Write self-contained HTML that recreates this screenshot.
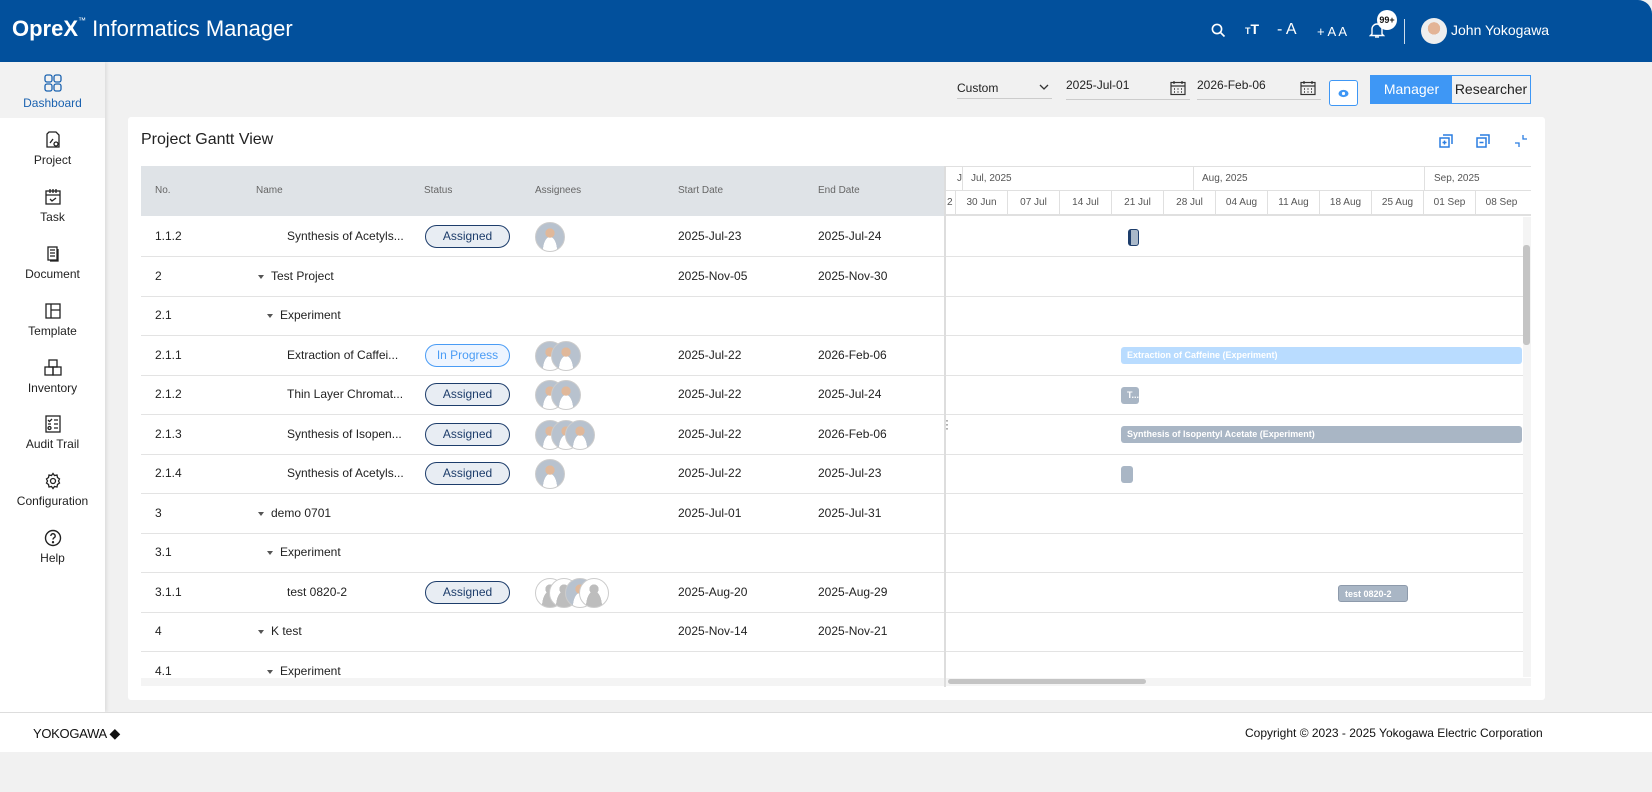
<!DOCTYPE html>
<html><head><meta charset="utf-8"><style>
*{box-sizing:border-box;margin:0;padding:0}
body{width:1652px;height:792px;overflow:hidden;background:#f1f1f1;font-family:"Liberation Sans","DejaVu Sans",sans-serif;color:#222;position:relative}
.hdr{position:absolute;left:0;top:0;width:1652px;height:62px;background:#02509c;color:#fff;border-top-right-radius:14px}
.abs{position:absolute}
.side{position:absolute;left:0;top:62px;width:105px;height:650px;background:#fff;box-shadow:2px 0 3px rgba(0,0,0,.08)}
.nav{position:absolute;left:0;width:105px;text-align:center;font-size:12px;color:#222}
.nav svg{display:block;margin:0 auto 4px}
.card{position:absolute;left:128px;top:117px;width:1417px;height:583px;background:#fff;border-radius:3px}
.th{position:absolute;top:166px;height:50px;font-size:10px;color:#666;line-height:50px}
.row{position:absolute;left:141px;width:1390px;height:40px;border-bottom:1px solid #e3e3e3;font-size:12px}
.row span{position:absolute;top:0;line-height:39px;white-space:nowrap}
.pill{position:absolute;left:284px;top:8px;width:85px;height:23px;border:1px solid #1d3d6b;border-radius:12px;background:#e8edf3;text-align:center;line-height:21px;font-size:12px;color:#1d3d6b}
.pill.ip{border-color:#4a9cf5;background:#eef5ff;color:#4a9cf5}
.av{position:absolute;top:5px;width:30px;height:30px;border-radius:50%;border:1px solid #ccc;background:radial-gradient(circle at 50% 36%,#e0b89a 0 20%,transparent 21%),radial-gradient(ellipse at 50% 100%,#fff 0 35%,transparent 36%),#b8c2ce}
.av.g{background:radial-gradient(circle at 50% 36%,#bdbdbd 0 20%,transparent 21%),radial-gradient(ellipse at 50% 100%,#bdbdbd 0 40%,transparent 41%),#fff}
.bar{position:absolute;height:17px;border-radius:3px;font-size:9px;color:#fff;line-height:17px;padding-left:6px;overflow:hidden;white-space:nowrap;font-weight:bold}
.wk{position:absolute;top:190px;height:25px;width:52px;border-left:1px solid #e0e0e0;font-size:10px;color:#555;text-align:center;line-height:25px}
.tri{display:inline-block;width:0;height:0;border-left:3.5px solid transparent;border-right:3.5px solid transparent;border-top:4px solid #555;margin-right:7px;vertical-align:middle}
</style></head><body>
<div class="hdr">
 <div class="abs" style="left:12px;top:14px;font-size:22px;line-height:30px"><b style="font-weight:bold">OpreX</b><sup style="font-size:8px;vertical-align:top;line-height:14px">™</sup> Informatics Manager</div>
 <svg class="abs" style="left:1211px;top:23px" width="15" height="15" viewBox="0 0 15 15"><circle cx="6" cy="6" r="4.6" fill="none" stroke="#fff" stroke-width="1.6"/><path d="M9.5 9.5L13.5 13.5" stroke="#fff" stroke-width="1.6"/></svg>
 <div class="abs" style="left:1245px;top:21px;font-size:14px;font-weight:bold"><span style="font-size:9px">T</span>T</div>
 <div class="abs" style="left:1277px;top:21px;font-size:16px">- A</div>
 <div class="abs" style="left:1317px;top:24px;font-size:13px">+ A A</div>
 <svg class="abs" style="left:1369px;top:21px" width="16" height="18" viewBox="0 0 16 18"><path d="M3 13V8a5 5 0 0110 0v5l1.5 1.5h-13z" fill="none" stroke="#fff" stroke-width="1.4"/><path d="M6 16h4" stroke="#fff" stroke-width="1.4"/></svg>
 <div class="abs" style="left:1377px;top:10px;width:20px;height:20px;border-radius:50%;background:#fff;color:#111;font-size:9px;font-weight:bold;text-align:center;line-height:20px">99+</div>
 <div class="abs" style="left:1404px;top:19px;width:1px;height:25px;background:#fff;opacity:.8"></div>
 <div class="abs" style="left:1421px;top:18px;width:26px;height:26px;border-radius:50%;background:radial-gradient(circle at 50% 40%,#e3b496 0 30%,#eee 31%)"></div>
 <div class="abs" style="left:1451px;top:22px;font-size:14px">John Yokogawa</div>
</div>
<div class="side">
 <div class="abs" style="left:0;top:0;width:105px;height:56px;background:#f2f2f2"></div>
 <div class="nav" style="top:12px;color:#1a62b0"><svg width="18" height="18" viewBox="0 0 18 18" fill="none" stroke="#1a62b0" stroke-width="1.3"><rect x="1" y="1" width="7" height="7" rx="2"/><rect x="10" y="1" width="7" height="7" rx="2"/><rect x="1" y="10" width="7" height="7" rx="2"/><rect x="10" y="10" width="7" height="7" rx="2"/></svg>Dashboard</div>
 <div class="nav" style="top:69px"><svg width="16" height="18" viewBox="0 0 16 18" fill="none" stroke="#222" stroke-width="1.3"><path d="M4 1h7l3 3v12H2V3z"/><circle cx="11" cy="13" r="2"/><path d="M5 12l3-4"/></svg>Project</div>
 <div class="nav" style="top:126px"><svg width="18" height="18" viewBox="0 0 18 18" fill="none" stroke="#222" stroke-width="1.3"><rect x="2" y="3" width="14" height="13"/><path d="M2 7h14M6 1v4M12 1v4M9 1v4M6 11l2 2 4-3"/></svg>Task</div>
 <div class="nav" style="top:183px"><svg width="16" height="18" viewBox="0 0 16 18" fill="none" stroke="#222" stroke-width="1.3"><rect x="3" y="2" width="9" height="13"/><path d="M5 5h5M5 8h5M5 11h5M13 4v12H5"/></svg>Document</div>
 <div class="nav" style="top:240px"><svg width="18" height="18" viewBox="0 0 18 18" fill="none" stroke="#222" stroke-width="1.3"><rect x="2" y="2" width="14" height="14"/><path d="M7 2v14M7 8h9"/></svg>Template</div>
 <div class="nav" style="top:297px"><svg width="18" height="18" viewBox="0 0 18 18" fill="none" stroke="#222" stroke-width="1.3"><rect x="5" y="1" width="8" height="7"/><rect x="1" y="8" width="8" height="8"/><rect x="9" y="8" width="8" height="8"/></svg>Inventory</div>
 <div class="nav" style="top:353px"><svg width="18" height="18" viewBox="0 0 18 18" fill="none" stroke="#222" stroke-width="1.3"><rect x="2" y="1" width="14" height="16"/><path d="M4 5l1.5 1.5L8 4M10 5h4M10 9h4M10 13h4M4 9h3"/><circle cx="5.5" cy="13" r="1.5"/></svg>Audit Trail</div>
 <div class="nav" style="top:410px"><svg width="18" height="18" viewBox="0 0 18 18" fill="none" stroke="#222" stroke-width="1.3"><circle cx="9" cy="9" r="2.5"/><path d="M9 1.5l1.5 2 2.5-.5.5 2.5 2 1.5-1 2 1 2-2 1.5-.5 2.5-2.5-.5-1.5 2-1.5-2-2.5.5-.5-2.5-2-1.5 1-2-1-2 2-1.5.5-2.5 2.5.5z"/></svg>Configuration</div>
 <div class="nav" style="top:467px"><svg width="18" height="18" viewBox="0 0 18 18" fill="none" stroke="#222" stroke-width="1.4"><circle cx="9" cy="9" r="7.5"/><path d="M6.8 7a2.2 2.2 0 114 1.2c-.9.6-1.8 1-1.8 2.3"/><circle cx="9" cy="13.2" r=".5" fill="#222"/></svg>Help</div>
</div>
<div class="abs" style="left:957px;top:81px;width:95px;height:18px;font-size:12px;border-bottom:1px solid #ccc">Custom<svg class="abs" style="left:82px;top:3px" width="10" height="7" viewBox="0 0 10 7"><path d="M1 1l4 4 4-4" fill="none" stroke="#333" stroke-width="1.3"/></svg></div>
<div class="abs" style="left:1066px;top:78px;width:124px;height:22px;font-size:12px;border-bottom:1px solid #ccc">2025-Jul-01</div>
<div class="abs" style="left:1197px;top:78px;width:124px;height:22px;font-size:12px;border-bottom:1px solid #ccc">2026-Feb-06</div>
<svg class="abs" style="left:1170px;top:80px" width="16" height="16" viewBox="0 0 16 16" fill="none" stroke="#333" stroke-width="1.2"><rect x="1" y="2.5" width="14" height="12"/><path d="M1 6h14M4 1v3M12 1v3"/><path d="M4 9h1M7.5 9h1M11 9h1M4 12h1M7.5 12h1M11 12h1" stroke-width="1.4"/></svg>
<svg class="abs" style="left:1300px;top:80px" width="16" height="16" viewBox="0 0 16 16" fill="none" stroke="#333" stroke-width="1.2"><rect x="1" y="2.5" width="14" height="12"/><path d="M1 6h14M4 1v3M12 1v3"/><path d="M4 9h1M7.5 9h1M11 9h1M4 12h1M7.5 12h1M11 12h1" stroke-width="1.4"/></svg>
<div class="abs" style="left:1329px;top:80px;width:29px;height:26px;border:1px solid #3e97f5;border-radius:3px;background:#fff"><svg class="abs" style="left:8px;top:8px" width="11" height="9" viewBox="0 0 11 9"><ellipse cx="5.5" cy="4.5" rx="5" ry="3.6" fill="#3e97f5"/><circle cx="5.5" cy="4.5" r="1.6" fill="#fff"/></svg></div>
<div class="abs" style="left:1370px;top:75px;width:161px;height:29px;border:1px solid #3e97f5;font-size:14px;line-height:27px">
 <div class="abs" style="left:0;top:0;width:81px;height:27px;background:#3e97f5;color:#fff;text-align:center">Manager</div>
 <div class="abs" style="left:81px;top:0;width:78px;height:27px;text-align:center;color:#222">Researcher</div>
</div>
<div class="card"></div>
<div class="abs" style="left:141px;top:131px;font-size:16px">Project Gantt View</div>
<svg class="abs" style="left:1439px;top:134px" width="14" height="14" viewBox="0 0 14 14" fill="none" stroke="#2a7de1" stroke-width="1.5"><rect x="1" y="4" width="9" height="9"/><path d="M4 1h9v9M3.5 8.5h4M5.5 6.5v4"/></svg>
<svg class="abs" style="left:1476px;top:134px" width="14" height="14" viewBox="0 0 14 14" fill="none" stroke="#2a7de1" stroke-width="1.5"><rect x="1" y="4" width="9" height="9"/><path d="M4 1h9v9M3.5 8.5h4"/></svg>
<svg class="abs" style="left:1514px;top:134px" width="14" height="14" viewBox="0 0 14 14" fill="none" stroke="#2a7de1" stroke-width="1.3"><path d="M9 1v4h4M5 13V9H1"/></svg>
<div class="abs" style="left:141px;top:166px;width:804px;height:50px;background:#dfe3e7"></div>
<div class="th" style="left:155px">No.</div><div class="th" style="left:256px">Name</div><div class="th" style="left:424px">Status</div><div class="th" style="left:535px">Assignees</div><div class="th" style="left:678px">Start Date</div><div class="th" style="left:818px">End Date</div>
<div class="abs" style="left:945px;top:166px;width:586px;height:50px;border-top:1px solid #e0e0e0;border-bottom:2px solid #e0e0e0;background:#fff"></div>
<div class="abs" style="left:945px;top:190px;width:586px;height:1px;background:#e0e0e0"></div>
<div class="abs" style="left:957px;top:166px;font-size:10px;color:#555;line-height:25px">J</div>
<div class="abs" style="left:962px;top:166px;width:1px;height:24px;background:#e0e0e0"></div>
<div class="abs" style="left:971px;top:166px;font-size:10px;color:#555;line-height:25px">Jul, 2025</div>
<div class="abs" style="left:1193px;top:166px;width:1px;height:24px;background:#e0e0e0"></div>
<div class="abs" style="left:1202px;top:166px;font-size:10px;color:#555;line-height:25px">Aug, 2025</div>
<div class="abs" style="left:1424px;top:166px;width:1px;height:24px;background:#e0e0e0"></div>
<div class="abs" style="left:1434px;top:166px;font-size:10px;color:#555;line-height:25px">Sep, 2025</div>
<div class="abs" style="left:947px;top:190px;font-size:10px;color:#555;line-height:25px">2</div>
<div class="wk" style="left:955px">30 Jun</div><div class="wk" style="left:1007px">07 Jul</div><div class="wk" style="left:1059px">14 Jul</div><div class="wk" style="left:1111px">21 Jul</div><div class="wk" style="left:1163px">28 Jul</div><div class="wk" style="left:1215px">04 Aug</div><div class="wk" style="left:1267px">11 Aug</div><div class="wk" style="left:1319px">18 Aug</div><div class="wk" style="left:1371px">25 Aug</div><div class="wk" style="left:1423px">01 Sep</div><div class="wk" style="left:1475px">08 Sep</div>
<div class="row" style="top:217px"><span style="left:14px">1.1.2</span><span style="left:146px">Synthesis of Acetyls...</span><div class="pill">Assigned</div><div class="av" style="left:394px"></div><span style="left:537px">2025-Jul-23</span><span style="left:677px">2025-Jul-24</span></div>
<div class="row" style="top:257px"><span style="left:14px">2</span><span style="left:117px"><i class="tri"></i>Test Project</span><span style="left:537px">2025-Nov-05</span><span style="left:677px">2025-Nov-30</span></div>
<div class="row" style="top:296px"><span style="left:14px">2.1</span><span style="left:126px"><i class="tri"></i>Experiment</span></div>
<div class="row" style="top:336px"><span style="left:14px">2.1.1</span><span style="left:146px">Extraction of Caffei...</span><div class="pill ip">In Progress</div><div class="av" style="left:394px"></div><div class="av" style="left:410px"></div><span style="left:537px">2025-Jul-22</span><span style="left:677px">2026-Feb-06</span></div>
<div class="row" style="top:375px"><span style="left:14px">2.1.2</span><span style="left:146px">Thin Layer Chromat...</span><div class="pill">Assigned</div><div class="av" style="left:394px"></div><div class="av" style="left:410px"></div><span style="left:537px">2025-Jul-22</span><span style="left:677px">2025-Jul-24</span></div>
<div class="row" style="top:415px"><span style="left:14px">2.1.3</span><span style="left:146px">Synthesis of Isopen...</span><div class="pill">Assigned</div><div class="av" style="left:394px"></div><div class="av" style="left:410px"></div><div class="av" style="left:424px"></div><span style="left:537px">2025-Jul-22</span><span style="left:677px">2026-Feb-06</span></div>
<div class="row" style="top:454px"><span style="left:14px">2.1.4</span><span style="left:146px">Synthesis of Acetyls...</span><div class="pill">Assigned</div><div class="av" style="left:394px"></div><span style="left:537px">2025-Jul-22</span><span style="left:677px">2025-Jul-23</span></div>
<div class="row" style="top:494px"><span style="left:14px">3</span><span style="left:117px"><i class="tri"></i>demo 0701</span><span style="left:537px">2025-Jul-01</span><span style="left:677px">2025-Jul-31</span></div>
<div class="row" style="top:533px"><span style="left:14px">3.1</span><span style="left:126px"><i class="tri"></i>Experiment</span></div>
<div class="row" style="top:573px"><span style="left:14px">3.1.1</span><span style="left:146px">test 0820-2</span><div class="pill">Assigned</div><div class="av g" style="left:394px"></div><div class="av g" style="left:408px"></div><div class="av" style="left:424px"></div><div class="av g" style="left:438px"></div><span style="left:537px">2025-Aug-20</span><span style="left:677px">2025-Aug-29</span></div>
<div class="row" style="top:612px"><span style="left:14px">4</span><span style="left:117px"><i class="tri"></i>K test</span><span style="left:537px">2025-Nov-14</span><span style="left:677px">2025-Nov-21</span></div>
<div class="row" style="top:652px;border:none"><span style="left:14px">4.1</span><span style="left:126px"><i class="tri"></i>Experiment</span></div>
<div class="abs" style="left:944px;top:166px;width:2px;height:521px;background:#ddd"></div>
<div class="abs" style="left:945px;top:418px;font-size:12px;line-height:4px;color:#555">·<br>·<br>·</div>
<div class="bar" style="left:1128px;top:229px;width:11px;background:#a9b8c9;border:1px solid #1d3d6b;border-left:3px solid #1d3d6b;padding:0"></div>
<div class="bar" style="left:1121px;top:347px;width:401px;background:#b9dcff">Extraction of Caffeine (Experiment)</div>
<div class="bar" style="left:1121px;top:387px;width:18px;background:#a9b6c5">T...</div>
<div class="bar" style="left:1121px;top:426px;width:401px;background:#a9b6c5">Synthesis of Isopentyl Acetate (Experiment)</div>
<div class="bar" style="left:1121px;top:466px;width:12px;background:#a9b6c5"></div>
<div class="bar" style="left:1338px;top:585px;width:70px;background:#a9b6c5;border:1px solid #8d9aab">test 0820-2</div>
<div class="abs" style="left:1523px;top:217px;width:8px;height:460px;background:#f4f4f4"></div>
<div class="abs" style="left:1523px;top:245px;width:7px;height:100px;background:#c4c4c4;border-radius:3px"></div>
<div class="abs" style="left:946px;top:678px;width:585px;height:8px;background:#f4f4f4"></div>
<div class="abs" style="left:948px;top:679px;width:198px;height:5px;background:#c4c4c4;border-radius:3px"></div>
<div class="abs" style="left:141px;top:678px;width:803px;height:8px;background:#f4f4f4"></div>
<div class="abs" style="left:0;top:712px;width:1652px;height:40px;background:#fff;border-top:1px solid #ddd"></div>
<div class="abs" style="left:33px;top:725px;font-size:13px;color:#111;letter-spacing:-.3px">YOKOGAWA <span style="font-size:14px">◆</span></div>
<div class="abs" style="left:1245px;top:726px;font-size:12px;color:#111">Copyright © 2023 - 2025 Yokogawa Electric Corporation</div>
</body></html>
